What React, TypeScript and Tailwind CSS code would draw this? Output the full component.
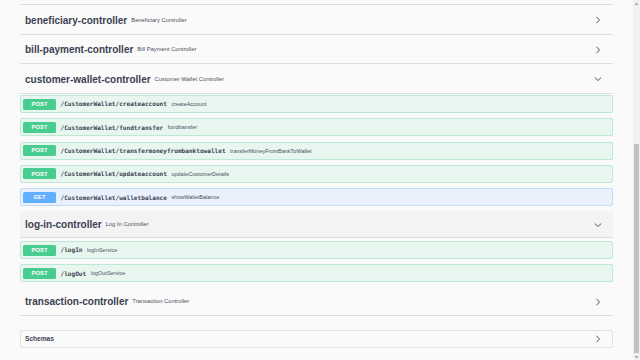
type Op = { method: "POST" | "GET"; path: string; summary: string };

type Tag = {
  name: string;
  description: string;
  open?: boolean;
  hovered?: boolean;
};

const walletOps: Op[] = [
  { method: "POST", path: "/CustomerWallet/createaccount", summary: "createAccount" },
  { method: "POST", path: "/CustomerWallet/fundtransfer", summary: "fundtransfer" },
  { method: "POST", path: "/CustomerWallet/transfermoneyfrombanktowallet", summary: "transferMoneyFromBankToWallet" },
  { method: "POST", path: "/CustomerWallet/updateaccount", summary: "updateCustomerDetails" },
  { method: "GET", path: "/CustomerWallet/walletbalance", summary: "showWalletBalance" },
];

const loginOps: Op[] = [
  { method: "POST", path: "/logIn", summary: "logInService" },
  { method: "POST", path: "/logOut", summary: "logOutService" },
];

function ChevronRight() {
  return (
    <svg width="8" height="8" viewBox="0 0 8 8" className="shrink-0">
      <polyline points="2.5,0.8 5.5,4 2.5,7.2" fill="none" stroke="#3b4151" strokeWidth="0.9" />
    </svg>
  );
}

function ChevronDown() {
  return (
    <svg width="8" height="8" viewBox="0 0 8 8" className="shrink-0">
      <polyline points="0.8,2.5 4,5.5 7.2,2.5" fill="none" stroke="#3b4151" strokeWidth="0.9" />
    </svg>
  );
}

function TagHeader({ tag, height }: { tag: Tag; height: string }) {
  return (
    <div
      className={`flex items-center justify-between border-b border-[#dedede] pl-[5px] pr-[11px] pt-[1.5px] ${height} ${
        tag.hovered ? "bg-[#f3f3f3]" : ""
      }`}
    >
      <div className="flex items-center gap-[4px]">
        <span className="text-[10px] font-bold text-[#3b4151]">{tag.name}</span>
        <span className="text-[5.8px] text-[#4a5060]">{tag.description}</span>
      </div>
      {tag.open ? <ChevronDown /> : <ChevronRight />}
    </div>
  );
}

function OpRow({ op }: { op: Op }) {
  const post = op.method === "POST";
  return (
    <div
      className={`flex h-[18px] items-center rounded-[2px] border pl-[2px] ${
        post ? "border-[#bde8d3] bg-[#e7f6ef]" : "border-[#c2dcf7] bg-[#e9f2fc]"
      }`}
    >
      <div
        className={`flex h-[11px] w-[33px] items-center justify-center rounded-[1.5px] text-[5.9px] font-bold text-white ${
          post ? "bg-[#49cc90]" : "bg-[#61affe]"
        }`}
      >
        {op.method}
      </div>
      <span className="ml-[4.5px] font-['DejaVu_Sans_Mono',monospace] text-[6.1px] font-bold text-[#3b4151]">
        {op.path}
      </span>
      <span className="ml-[4.5px] text-[5.5px] text-[#4a5060]">{op.summary}</span>
    </div>
  );
}

function Scrollbar() {
  return (
    <div className="flex h-full w-[7px] flex-col bg-[#f1f1f1]">
      <div className="flex h-[8px] items-center justify-center">
        <svg width="5" height="4" viewBox="0 0 5 4">
          <polygon points="2.5,0.5 4.5,3 0.5,3" fill="#a3a3a3" />
        </svg>
      </div>
      <div className="h-[136px]" />
      <div className="mx-[1px] h-[209px] bg-[#c1c1c1]" />
      <div className="flex flex-1 items-center justify-center">
        <svg width="5" height="4" viewBox="0 0 5 4">
          <polygon points="0.5,1 4.5,1 2.5,3.5" fill="#a3a3a3" />
        </svg>
      </div>
    </div>
  );
}

export default function App() {
  return (
    <div className="flex h-[360px] w-[640px] overflow-hidden bg-[#fafafa] font-['Liberation_Sans',Arial,sans-serif]">
      <div className="flex-1 px-[20px]">
        <div className="h-[5px] border-b border-[#dedede]" />
        <TagHeader tag={{ name: "beneficiary-controller", description: "Beneficiary Controller" }} height="h-[30px]" />
        <TagHeader tag={{ name: "bill-payment-controller", description: "Bill Payment Controller" }} height="h-[29px]" />
        <TagHeader
          tag={{ name: "customer-wallet-controller", description: "Customer Wallet Controller", open: true }}
          height="h-[30px]"
        />
        <div className="flex flex-col gap-[5.33px] pt-[1px]">
          {walletOps.map((op) => (
            <OpRow key={op.path} op={op} />
          ))}
        </div>
        <div className="pt-[4.7px]">
          <TagHeader
            tag={{ name: "log-in-controller", description: "Log In Controller", open: true, hovered: true }}
            height="h-[27px]"
          />
        </div>
        <div className="flex flex-col gap-[5.33px] pt-[3px]">
          {loginOps.map((op) => (
            <OpRow key={op.path} op={op} />
          ))}
        </div>
        <div className="pt-[4.7px]">
          <TagHeader
            tag={{ name: "transaction-controller", description: "Transaction Controller" }}
            height="h-[29px]"
          />
        </div>
        <div className="mt-[14px] flex h-[18px] items-center justify-between rounded-[2px] border border-[#e2e2e2] pl-[4px] pr-[10px]">
          <span className="text-[6.6px] font-bold text-[#3b4151]">Schemas</span>
          <ChevronRight />
        </div>
      </div>
      <Scrollbar />
    </div>
  );
}
